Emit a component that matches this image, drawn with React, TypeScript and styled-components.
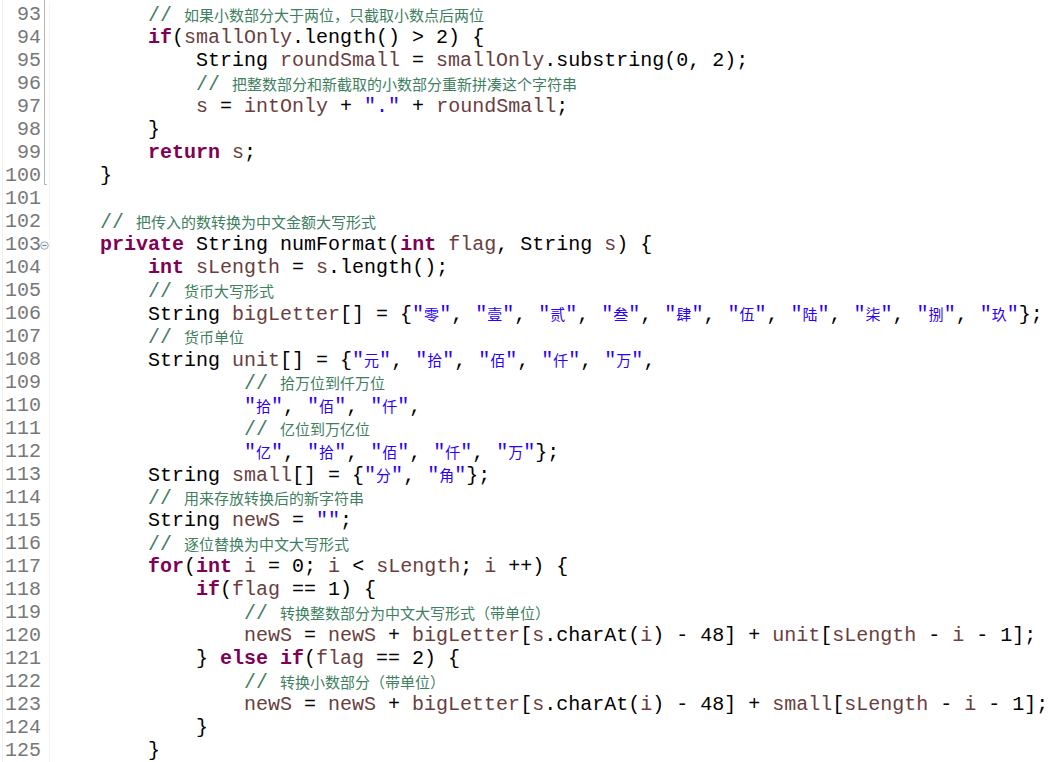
import React from "react";
import styled, { createGlobalStyle } from "styled-components";

const Global = createGlobalStyle`
  html, body { margin: 0; padding: 0; background: #ffffff; }
  body { overflow: hidden; }
`;

const Editor = styled.div`
  width: 1057px;
  height: 762px;
  overflow: hidden;
  box-sizing: border-box;
  padding-top: 3px;
  background: #ffffff;
  font-family: "Liberation Mono", "Noto Sans CJK SC", monospace;
  font-size: 20px;
  line-height: 23px;
  border-left: 1px solid #f0f0f0;
  margin-left: 2px;
`;

const Row = styled.div`
  display: grid;
  grid-template-columns: 38px 8px 1px 1fr;
  height: 23px;
`;

const LineNo = styled.div`
  color: #787878;
  text-align: right;
  white-space: pre;
`;

const Marker = styled.div<{ $range?: "mid" | "end" }>`
  position: relative;
  display: flex;
  align-items: center;
  justify-content: center;
  ${(p) =>
    p.$range
      ? `&::before {
      content: "";
      position: absolute;
      left: 3px;
      top: ${p.$range === "mid" ? "-3px" : "0"};
      bottom: ${p.$range === "end" ? "2px" : "0"};
      width: 1px;
      background: #b8b8b8;
    }`
      : ""}
  ${(p) =>
    p.$range === "end"
      ? `&::after {
      content: "";
      position: absolute;
      left: 3px;
      bottom: 2px;
      width: 3px;
      height: 1px;
      background: #b8b8b8;
    }`
      : ""}
`;

const Divider = styled.div`
  background: #f2f2f2;
`;

const Code = styled.div`
  padding-left: 2px;
  white-space: pre;
  color: #000000;
`;

const Tok = styled.span<{ $kind: string }>`
  color: ${(p) =>
    p.$kind === "k"
      ? "#7f0055"
      : p.$kind === "v"
      ? "#6a3e3e"
      : p.$kind === "s"
      ? "#2a00ff"
      : p.$kind === "c"
      ? "#3f7f5f"
      : "#000000"};
  font-weight: ${(p) => (p.$kind === "k" ? 700 : 400)};
`;

const Han = styled.span`
  font-family: "Noto Sans CJK SC", sans-serif;
  font-size: 15px;
  font-weight: 400;
`;

const FoldIcon = styled.svg`
  display: block;
  margin-top: 1px;
  margin-left: -2px;
`;

const KEYWORDS = new Set(["if", "return", "private", "int", "for", "else"]);
const VARS = new Set([
  "smallOnly",
  "roundSmall",
  "intOnly",
  "s",
  "flag",
  "sLength",
  "bigLetter",
  "unit",
  "small",
  "newS",
  "i",
]);

const LINES: string[] = [
  "        // 如果小数部分大于两位，只截取小数点后两位",
  "        if(smallOnly.length() > 2) {",
  "            String roundSmall = smallOnly.substring(0, 2);",
  "            // 把整数部分和新截取的小数部分重新拼凑这个字符串",
  '            s = intOnly + "." + roundSmall;',
  "        }",
  "        return s;",
  "    }",
  "",
  "    // 把传入的数转换为中文金额大写形式",
  "    private String numFormat(int flag, String s) {",
  "        int sLength = s.length();",
  "        // 货币大写形式",
  '        String bigLetter[] = {"零", "壹", "贰", "叁", "肆", "伍", "陆", "柒", "捌", "玖"};',
  "        // 货币单位",
  '        String unit[] = {"元", "拾", "佰", "仟", "万",',
  "                // 拾万位到仟万位",
  '                "拾", "佰", "仟",',
  "                // 亿位到万亿位",
  '                "亿", "拾", "佰", "仟", "万"};',
  '        String small[] = {"分", "角"};',
  "        // 用来存放转换后的新字符串",
  '        String newS = "";',
  "        // 逐位替换为中文大写形式",
  "        for(int i = 0; i < sLength; i ++) {",
  "            if(flag == 1) {",
  "                // 转换整数部分为中文大写形式（带单位）",
  "                newS = newS + bigLetter[s.charAt(i) - 48] + unit[sLength - i - 1];",
  "            } else if(flag == 2) {",
  "                // 转换小数部分（带单位）",
  "                newS = newS + bigLetter[s.charAt(i) - 48] + small[sLength - i - 1];",
  "            }",
  "        }",
];

const CJK = /([\u3000-\u303f\u3400-\u9fff\uff00-\uffef]+)/;

function withHan(text: string, key: string) {
  return text.split(CJK).map((part, i) =>
    i % 2 === 1 ? <Han key={key + "h" + i}>{part}</Han> : part
  );
}

function highlight(line: string) {
  const re = /(\/\/.*$)|("[^"]*")|([A-Za-z_]\w*)|([^A-Za-z_"\/]+|\/)/g;
  const out: React.ReactNode[] = [];
  let m: RegExpExecArray | null;
  let n = 0;
  let prevDot = false;
  while ((m = re.exec(line)) !== null) {
    const key = "t" + n++;
    if (m[1]) out.push(<Tok key={key} $kind="c">{withHan(m[1], key)}</Tok>);
    else if (m[2]) out.push(<Tok key={key} $kind="s">{withHan(m[2], key)}</Tok>);
    else if (m[3]) {
      const w = m[3];
      const kind = KEYWORDS.has(w) ? "k" : VARS.has(w) && !prevDot ? "v" : "p";
      out.push(<Tok key={key} $kind={kind}>{w}</Tok>);
    } else out.push(<Tok key={key} $kind="p">{m[4]}</Tok>);
    prevDot = m[0].endsWith(".");
  }
  return out;
}

export default function App() {
  return (
    <>
      <Global />
      <Editor>
        {LINES.map((line, idx) => {
          const num = 93 + idx;
          const range = num < 100 ? "mid" : num === 100 ? "end" : undefined;
          return (
            <Row key={num}>
              <LineNo>{num}</LineNo>
              <Marker $range={range}>
                {num === 103 && (
                  <FoldIcon width="9" height="9" viewBox="0 0 9 9">
                    <circle cx="4.5" cy="4.5" r="3.8" fill="#f4f6f8" stroke="#9aa6b4" strokeWidth="1" />
                    <line x1="2.5" y1="4.5" x2="6.5" y2="4.5" stroke="#6f7d8c" strokeWidth="1" />
                  </FoldIcon>
                )}
              </Marker>
              <Divider />
              <Code>{highlight(line)}</Code>
            </Row>
          );
        })}
      </Editor>
    </>
  );
}
